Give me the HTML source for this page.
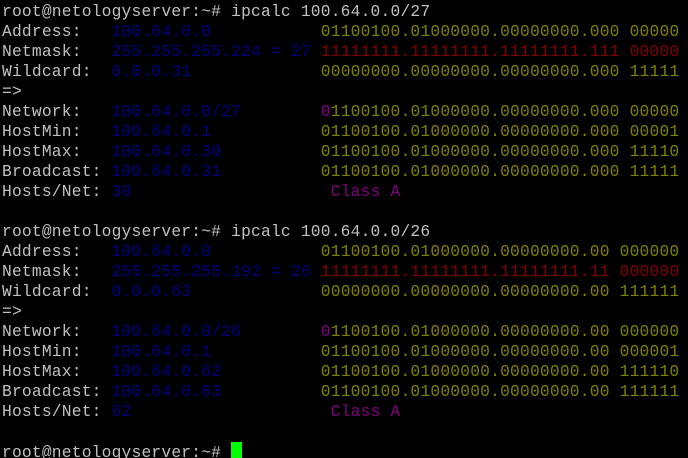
<!DOCTYPE html>
<html><head><meta charset="utf-8"><style>
html,body{margin:0;padding:0;background:#000;width:688px;height:458px;overflow:hidden}
pre{margin:0;padding:2px 0 0 2px;font-family:"Liberation Mono",monospace;font-size:16.27px;letter-spacing:0.2px;line-height:20px;color:#c0c0c0;white-space:pre}
.b{color:#000080}.y{color:#808000}.r{color:#800000}.m{color:#800080}
.c{display:inline-block;width:11px;height:19px;background:#00ff00;vertical-align:-4px}
</style></head><body><pre>root@netologyserver:~# ipcalc 100.64.0.0/27
Address:   <span class="b">100.64.0.0</span>           <span class="y">01100100.01000000.00000000.000 00000</span>
Netmask:   <span class="b">255.255.255.224 = 27</span> <span class="r">11111111.11111111.11111111.111 00000</span>
Wildcard:  <span class="b">0.0.0.31</span>             <span class="y">00000000.00000000.00000000.000 11111</span>
=&gt;
Network:   <span class="b">100.64.0.0/27</span>        <span class="m">0</span><span class="y">1100100.01000000.00000000.000 00000</span>
HostMin:   <span class="b">100.64.0.1</span>           <span class="y">01100100.01000000.00000000.000 00001</span>
HostMax:   <span class="b">100.64.0.30</span>          <span class="y">01100100.01000000.00000000.000 11110</span>
Broadcast: <span class="b">100.64.0.31</span>          <span class="y">01100100.01000000.00000000.000 11111</span>
Hosts/Net: <span class="b">30</span>                    <span class="m">Class A</span>

root@netologyserver:~# ipcalc 100.64.0.0/26
Address:   <span class="b">100.64.0.0</span>           <span class="y">01100100.01000000.00000000.00 000000</span>
Netmask:   <span class="b">255.255.255.192 = 26</span> <span class="r">11111111.11111111.11111111.11 000000</span>
Wildcard:  <span class="b">0.0.0.63</span>             <span class="y">00000000.00000000.00000000.00 111111</span>
=&gt;
Network:   <span class="b">100.64.0.0/26</span>        <span class="m">0</span><span class="y">1100100.01000000.00000000.00 000000</span>
HostMin:   <span class="b">100.64.0.1</span>           <span class="y">01100100.01000000.00000000.00 000001</span>
HostMax:   <span class="b">100.64.0.62</span>          <span class="y">01100100.01000000.00000000.00 111110</span>
Broadcast: <span class="b">100.64.0.63</span>          <span class="y">01100100.01000000.00000000.00 111111</span>
Hosts/Net: <span class="b">62</span>                    <span class="m">Class A</span>

root@netologyserver:~# <span class="c"></span></pre></body></html>
